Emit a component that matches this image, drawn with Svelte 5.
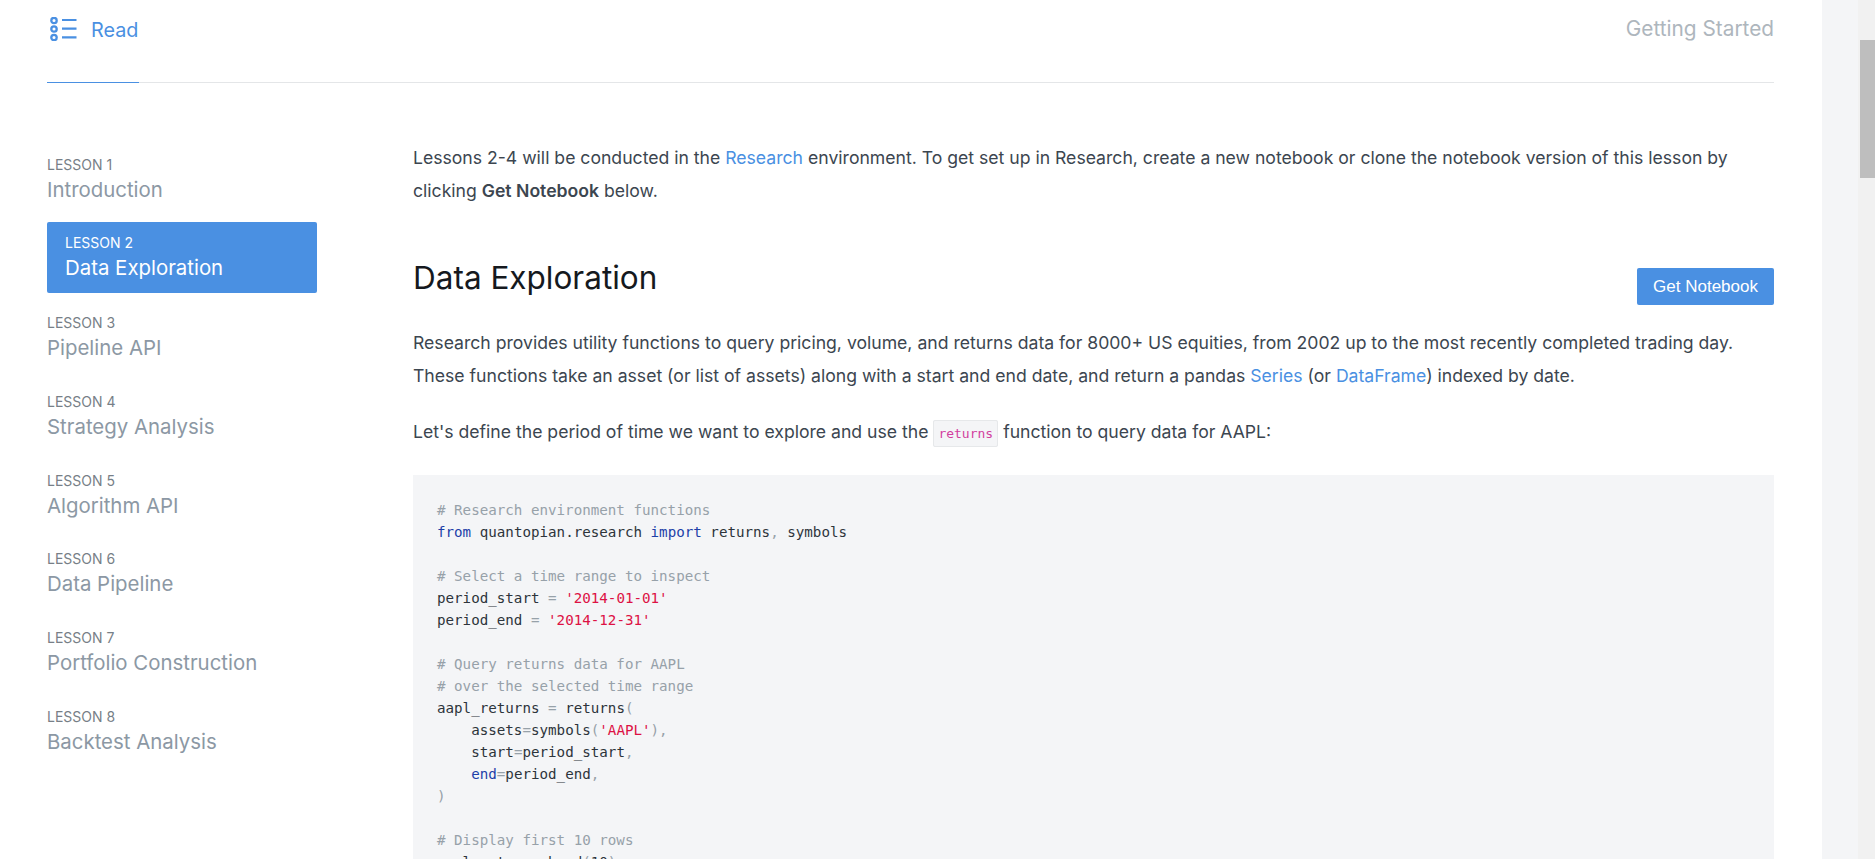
<script>
  const lessons = [
    { label: 'LESSON 1', title: 'Introduction' },
    { label: 'LESSON 2', title: 'Data Exploration', active: true },
    { label: 'LESSON 3', title: 'Pipeline API' },
    { label: 'LESSON 4', title: 'Strategy Analysis' },
    { label: 'LESSON 5', title: 'Algorithm API' },
    { label: 'LESSON 6', title: 'Data Pipeline' },
    { label: 'LESSON 7', title: 'Portfolio Construction' },
    { label: 'LESSON 8', title: 'Backtest Analysis' }
  ];
</script>

<div class="page">
  <div class="main">
    <header class="tabs">
      <a class="tab" href="#read">
        <svg width="27" height="24" viewBox="0 0 27 24" fill="none" stroke="#4a90e2">
          <circle cx="4" cy="3.5" r="2.7" stroke-width="2.3" />
          <circle cx="4" cy="12" r="2.7" stroke-width="2.3" />
          <circle cx="4" cy="20.5" r="2.7" stroke-width="2.3" />
          <path d="M12 3H26.5M12 11.7H26.5M12 20.3H26.5" stroke-width="2.2" />
        </svg>
        <span>Read</span>
      </a>
      <span class="crumb">Getting Started</span>
    </header>

    <div class="body">
      <nav class="side">
        {#each lessons as l}
          <a class="lesson" class:active={l.active} href="#lesson">
            <span class="label">{l.label}</span>
            <span class="title">{l.title}</span>
          </a>
        {/each}
      </nav>

      <article class="content">
        <p class="intro">
          Lessons 2-4 will be conducted in the <a href="#research">Research</a> environment. To get set up in Research, create a new notebook or clone the notebook version of this lesson by clicking <strong>Get Notebook</strong> below.
        </p>

        <div class="head">
          <h2>Data Exploration</h2>
          <button>Get Notebook</button>
        </div>

        <p>
          Research provides utility functions to query pricing, volume, and returns data for 8000+ US equities, from 2002 up to the most recently completed trading day. These functions take an asset (or list of assets) along with a start and end date, and return a pandas <a href="#series">Series</a> (or <a href="#dataframe">DataFrame</a>) indexed by date.
        </p>

        <p class="last">
          Let's define the period of time we want to explore and use the <code>returns</code> function to query data for AAPL:
        </p>

        <pre><span class="c"># Research environment functions</span>
<span class="k">from</span> quantopian.research <span class="k">import</span> returns<span class="p">,</span> symbols

<span class="c"># Select a time range to inspect</span>
period_start <span class="p">=</span> <span class="s">'2014-01-01'</span>
period_end <span class="p">=</span> <span class="s">'2014-12-31'</span>

<span class="c"># Query returns data for AAPL</span>
<span class="c"># over the selected time range</span>
aapl_returns <span class="p">=</span> returns<span class="p">(</span>
    assets<span class="p">=</span>symbols<span class="p">(</span><span class="s">'AAPL'</span><span class="p">),</span>
    start<span class="p">=</span>period_start<span class="p">,</span>
    <span class="k">end</span><span class="p">=</span>period_end<span class="p">,</span>
<span class="p">)</span>

<span class="c"># Display first 10 rows</span>
aapl_returns.head<span class="p">(</span>10<span class="p">)</span></pre>
      </article>
    </div>
  </div>

  <div class="gutter"></div>
  <div class="scrollbar"><div class="thumb"></div></div>
</div>

<style>
  :global(body) {
    margin: 0;
    overflow: hidden;
    background: #fff;
  }

  .page {
    display: flex;
    height: 859px;
    overflow: hidden;
    font-family: "Inter", "Noto Sans", sans-serif;
  }

  .main {
    flex: 1;
    min-width: 0;
    padding: 0 48px 0 47px;
  }

  .gutter {
    width: 36px;
    background: #f4f5f7;
  }

  .scrollbar {
    width: 17px;
    background: #f1f1f1;
    padding-top: 40px;
    box-sizing: border-box;
  }

  .thumb {
    height: 138px;
    margin-left: 2px;
    background: #bebebe;
  }

  .tabs {
    display: flex;
    justify-content: space-between;
    height: 82px;
    border-bottom: 1px solid #e4e6e8;
  }

  .tab {
    display: flex;
    align-items: flex-start;
    gap: 14px;
    width: 92px;
    height: 83px;
    padding: 17px 0 0 3px;
    box-sizing: border-box;
    border-bottom: 1px solid #4a90e2;
    color: #4a90e2;
    font-size: 19.8px;
    line-height: 24px;
    text-decoration: none;
  }

  .tab span {
    padding-top: 1px;
  }

  .crumb {
    padding-top: 17px;
    font-size: 20.8px;
    line-height: 24px;
    color: #aeb6bd;
  }

  .body {
    display: flex;
    padding-top: 58px;
  }

  .side {
    width: 270px;
    flex: none;
    display: flex;
    flex-direction: column;
    gap: 7.8px;
    margin: 2.4px 96px 0 0;
  }

  .lesson {
    display: flex;
    flex-direction: column;
    height: 71px;
    padding: 13px 0 0;
    box-sizing: border-box;
    border-radius: 2px;
    text-decoration: none;
    color: #8c98a4;
  }

  .lesson.active {
    background: #4a90e2;
    color: #fff;
    padding: 12px 0 0 18px;
  }

  .label {
    font-size: 14px;
    line-height: 18px;
    color: #777f87;
  }

  .active .label {
    color: #fff;
  }

  .title {
    font-size: 20.4px;
    line-height: 32px;
  }

  .content {
    flex: 1;
    min-width: 0;
    color: #3c4650;
  }

  p {
    margin: 0 0 23px;
    font-size: 17.63px;
    line-height: 33px;
  }

  p.last {
    margin-bottom: 25px;
  }

  .intro {
    margin-bottom: 47px;
  }

  p a {
    color: #4a90e2;
    text-decoration: none;
  }

  strong {
    font-weight: 600;
  }

  .head {
    display: flex;
    justify-content: space-between;
    align-items: flex-start;
    height: 51px;
    margin-bottom: 21px;
  }

  h2 {
    margin: 0;
    font-size: 31.5px;
    font-weight: 400;
    line-height: 48px;
    color: #15191e;
  }

  button {
    align-self: flex-end;
    width: 137px;
    height: 37px;
    border: 0;
    border-radius: 2px;
    background: #4a90e2;
    color: #fff;
    font-family: "Liberation Sans", Arial, sans-serif;
    font-size: 17px;
  }

  code {
    padding: 5px 4px;
    border: 1px solid #e6e8ea;
    border-radius: 2px;
    background: #f4f5f7;
    color: #d23f9f;
    font-family: "DejaVu Sans Mono", monospace;
    font-size: 13px;
  }

  pre {
    margin: 0;
    padding: 24px 24px 24px;
    background: #f4f5f7;
    color: #2d343b;
    font-family: "DejaVu Sans Mono", monospace;
    font-size: 14.2px;
    line-height: 22px;
  }

  .c { color: #97a1a9; }
  .k { color: #1d3fa8; }
  .s { color: #dd1144; }
  .p { color: #97a1a9; }
</style>
